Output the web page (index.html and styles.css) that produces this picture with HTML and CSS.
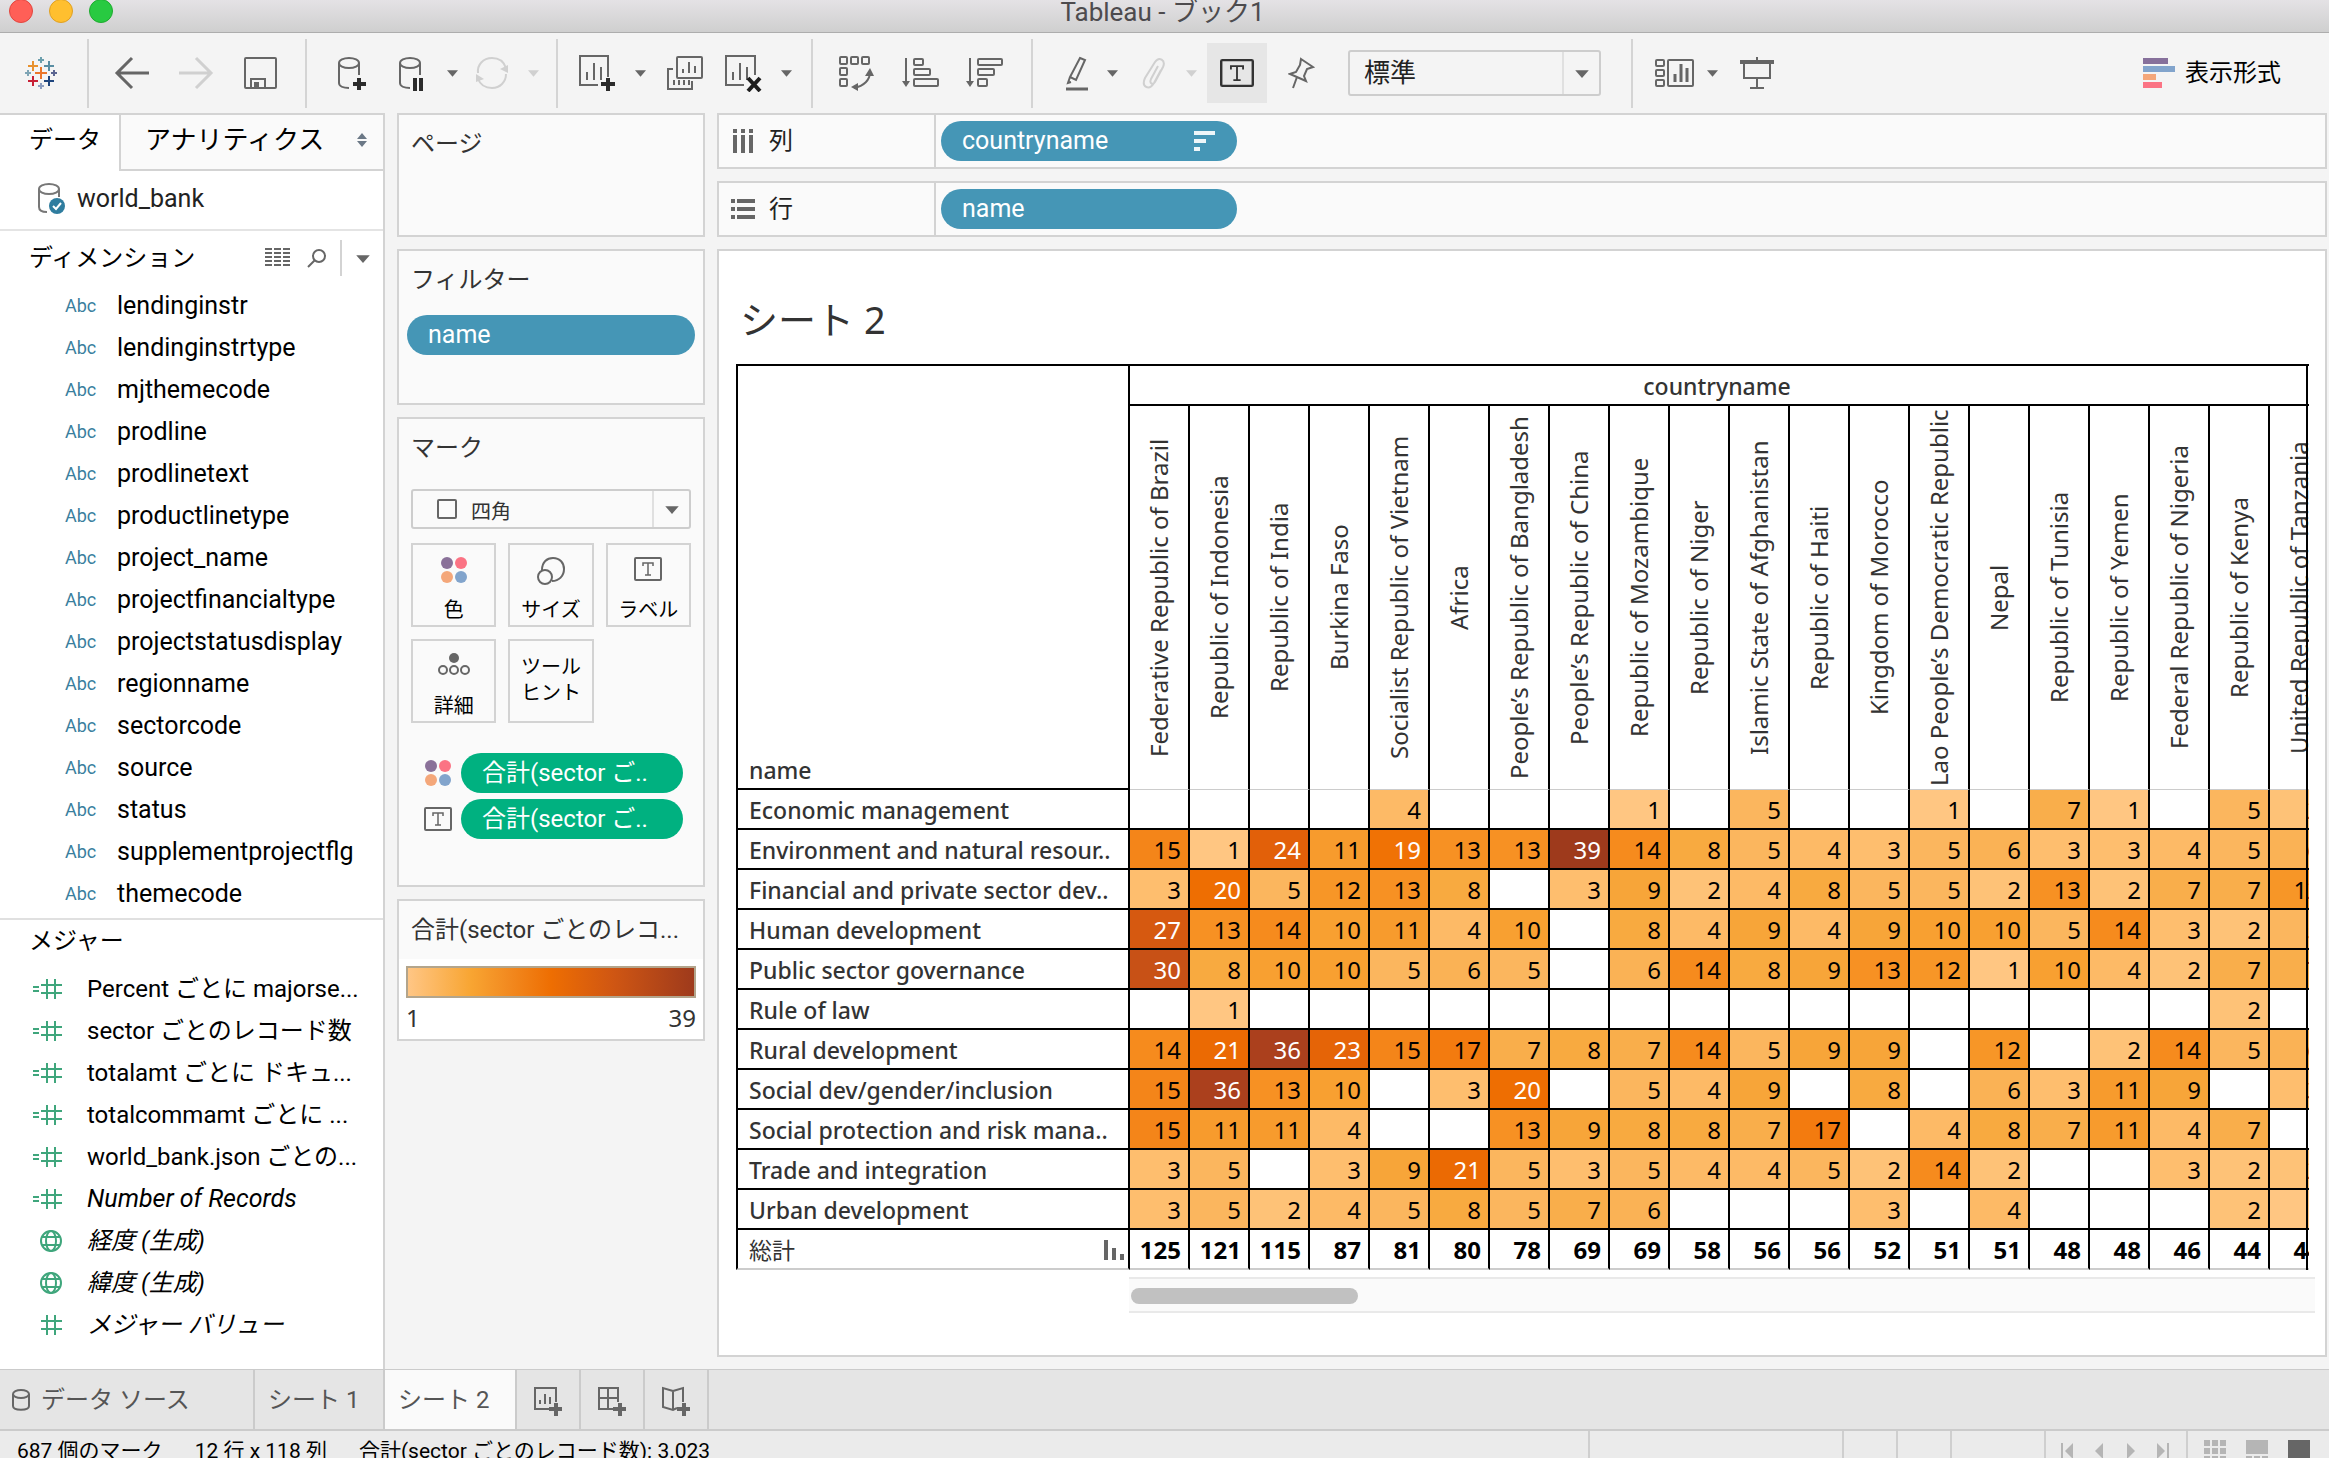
FILE: index.html
```html
<!DOCTYPE html>
<html lang="ja">
<head>
<meta charset="utf-8">
<title>Tableau - ブック1</title>
<link rel="stylesheet" href="styles.css">
</head>
<body>
<svg class="defs" aria-hidden="true">
  <symbol id="caret" viewBox="0 0 12 8"><path d="M0 1h12L6 8z"/></symbol>
  <symbol id="dots" viewBox="0 0 26 26"><circle cx="6" cy="6" r="6" fill="#8a7199"/><circle cx="20" cy="6" r="6" fill="#fb7384"/><circle cx="6" cy="20" r="6" fill="#f4a77a"/><circle cx="20" cy="20" r="6" fill="#82a4cc"/></symbol>
  <symbol id="tbox" viewBox="0 0 28 24"><rect x="1" y="1" width="26" height="22" rx="1" fill="none" stroke="currentColor" stroke-width="2"/><path d="M9 9V6h10v3M14 6v12M11 18h6" fill="none" stroke="currentColor" stroke-width="1.5"/></symbol>
  <symbol id="num" viewBox="0 0 30 20"><path d="M0 8h6M0 12h6M8 6h21M8 14h21M14 0v20M22 0v20" fill="none" stroke="#3fa67c" stroke-width="2"/></symbol>
  <symbol id="hash" viewBox="0 0 30 20"><path d="M8 6h21M8 14h21M14 0v20M22 0v20" fill="none" stroke="#3fa67c" stroke-width="2"/></symbol>
  <symbol id="globe" viewBox="0 0 30 22"><g fill="none" stroke="#3fa67c" stroke-width="2"><circle cx="18" cy="11" r="10"/><ellipse cx="18" cy="11" rx="5" ry="10"/><path d="M9 7h18M9 15h18"/></g></symbol>
</svg>

<header class="titlebar">
  <div class="lights"><i class="red"></i><i class="yellow"></i><i class="green"></i></div>
  <h1>Tableau - ブック1</h1>
</header>

<div class="toolbar">
  <div class="group start">
    <button class="tool" aria-label="スタート ページ"><svg width="34" height="34" viewBox="0 0 34 34" fill="none" stroke-width="2">
      <path d="M17 11v12M11 17h12" stroke="#eb762a"/><path d="M9 5v10M4 10h10" stroke="#e8912d"/><path d="M25 5v10M20 10h10" stroke="#5a8ea3"/><path d="M9 20v10M4 25h10" stroke="#c72035"/><path d="M25 20v10M20 25h10" stroke="#1f457e"/><path d="M17 1v6M14 4h6" stroke="#6c9fad"/><path d="M17 27v6M14 30h6" stroke="#8b9dc0"/><path d="M4 14v6M1 17h6" stroke="#7fa5b5"/><path d="M30 14v6M27 17h6" stroke="#5b6591"/></svg></button>
  </div>
  <div class="group history">
    <button class="tool" aria-label="元に戻す"><svg width="36" height="34" viewBox="0 0 36 34" fill="none" stroke="#666" stroke-width="3"><path d="M35 17H3M18 2L3 17l15 15"/></svg></button>
    <button class="tool off" aria-label="やり直し"><svg width="36" height="34" viewBox="0 0 36 34" fill="none" stroke="#d0d0d0" stroke-width="3"><path d="M1 17h32M18 2l15 15-15 15"/></svg></button>
    <button class="tool" aria-label="保存"><svg width="36" height="34" viewBox="0 0 36 34" fill="none" stroke="#666" stroke-width="2"><rect x="3" y="2" width="31" height="30" rx="1"/><path d="M9 32v-9h14v9"/><path d="M13 27h3v5h-3z" fill="#666"/></svg></button>
  </div>
  <div class="group source">
    <button class="tool wide" aria-label="新しいデータ ソース"><svg width="30" height="36" viewBox="0 0 30 36" fill="none" stroke="#666" stroke-width="2"><ellipse cx="12" cy="8" rx="10" ry="5"/><path d="M2 8v20c0 3 4 5 10 5M22 8v12"/><path d="M22 23v12M16 29h13" stroke="#2b2b2b" stroke-width="4"/></svg></button>
    <span class="split"><button class="tool" aria-label="自動更新の一時停止"><svg width="30" height="36" viewBox="0 0 30 36" fill="none" stroke="#666" stroke-width="2"><ellipse cx="12" cy="8" rx="10" ry="5"/><path d="M2 8v20c0 3 4 5 10 5M22 8v12"/><path d="M17 23v13M23 23v13" stroke="#2b2b2b" stroke-width="4"/></svg></button><button class="tool drop" aria-label="更新の設定"><svg><use href="#caret"/></svg></button></span>
    <span class="split off"><button class="tool" aria-label="更新の実行"><svg width="34" height="34" viewBox="0 0 34 34" fill="none" stroke="#d0d0d0" stroke-width="2"><path d="M3 17C2 9 8 2 17 2c7 0 12 4 14 10M31 18c0 8-6 14-14 14-7 0-12-4-14-9"/><path d="M33 9v8l-8-4zM1 26v-8l8 5z" fill="#d0d0d0" stroke="none"/></svg></button><button class="tool drop" aria-label="実行の設定"><svg><use href="#caret"/></svg></button></span>
  </div>
  <div class="group sheets">
    <span class="split"><button class="tool" aria-label="新しいワークシート"><svg width="38" height="38" viewBox="0 0 38 38" fill="none" stroke="#666" stroke-width="2"><path d="M30 23V2H2v29h18M9 26v-8M16 26V9M23 26V13"/><path d="M30 24v13M23 30h14" stroke="#2b2b2b" stroke-width="4"/></svg></button><button class="tool drop" aria-label="シートの種類"><svg><use href="#caret"/></svg></button></span>
    <button class="tool" aria-label="シートの複製"><svg width="38" height="36" viewBox="0 0 38 36" fill="none" stroke="#666" stroke-width="2"><rect x="11" y="2" width="25" height="21" rx="1"/><path d="M17 18v-4M23 18V7M29 18v-7M7 14H2v20h24v-8M8 30v-5M13 30v-5M18 30v-5M23 30v-5"/></svg></button>
    <span class="split"><button class="tool" aria-label="シートのクリア"><svg width="38" height="38" viewBox="0 0 38 38" fill="none" stroke="#666" stroke-width="2"><path d="M31 21V2H2v29h18M9 26v-8M16 26V9M23 26V13"/><path d="M24 24l12 13M36 24L24 37" stroke="#1f1f1f" stroke-width="4"/></svg></button><button class="tool drop" aria-label="クリアの種類"><svg><use href="#caret"/></svg></button></span>
  </div>
  <div class="group sorts">
    <button class="tool" aria-label="行と列の交換"><svg width="36" height="36" viewBox="0 0 36 36" fill="none" stroke="#666" stroke-width="2"><rect x="1" y="2" width="7" height="7" rx="1"/><rect x="12" y="2" width="7" height="7" rx="1"/><rect x="23" y="2" width="7" height="7" rx="1"/><rect x="1" y="13" width="7" height="7" rx="1"/><rect x="1" y="24" width="7" height="7" rx="1"/><path d="M31 17c0 8-6 14-16 16"/><path d="M31 13l4 8h-9zM12 32l7-4v8z" fill="#666" stroke="none"/></svg></button>
    <button class="tool" aria-label="昇順で並べ替え"><svg width="37" height="32" viewBox="0 0 37 32" fill="none" stroke="#666" stroke-width="2"><path d="M4 1v25"/><path d="M0 24h8l-4 6z" fill="#666" stroke="none"/><rect x="12" y="2" width="9" height="6" rx="1"/><rect x="12" y="12" width="16" height="6" rx="1"/><rect x="12" y="22" width="24" height="7" rx="1"/></svg></button>
    <button class="tool" aria-label="降順で並べ替え"><svg width="37" height="32" viewBox="0 0 37 32" fill="none" stroke="#666" stroke-width="2"><path d="M4 1v25"/><path d="M0 24h8l-4 6z" fill="#666" stroke="none"/><rect x="12" y="2" width="24" height="6" rx="1"/><rect x="12" y="12" width="16" height="6" rx="1"/><rect x="12" y="22" width="9" height="7" rx="1"/></svg></button>
  </div>
  <div class="group format">
    <span class="split"><button class="tool" aria-label="ハイライト"><svg width="22" height="36" viewBox="0 0 22 36" fill="none" stroke="#666" stroke-width="2"><path d="M14 3l5 2-9 20-6-3zM4 22l-2 6 3-1"/><path d="M0 34h22" stroke-width="3"/></svg></button><button class="tool drop" aria-label="ハイライトの設定"><svg><use href="#caret"/></svg></button></span>
    <span class="split off"><button class="tool" aria-label="グループ化"><svg width="25" height="32" viewBox="0 0 25 32" fill="none" stroke="#d0d0d0" stroke-width="2"><path d="M16 9L9 22c-2 5 2 6 4 3l8-15c3-7-4-11-8-5L3 21c-4 9 4 13 9 5l7-13"/></svg></button><button class="tool drop" aria-label="グループの設定"><svg><use href="#caret"/></svg></button></span>
    <button class="tool pressed" aria-label="マーク ラベルの表示" aria-pressed="true"><svg width="34" height="28" viewBox="0 0 28 24" preserveAspectRatio="none"><use href="#tbox"/></svg></button>
    <button class="tool" aria-label="軸の固定"><svg width="27" height="32" viewBox="0 0 27 32" fill="none" stroke="#666" stroke-width="2"><path d="M13 2l12 8-6 2-3 7 2 5L2 17l6-2 4-7zM9 20L5 31"/></svg></button>
    <label class="select fit"><select aria-label="サイズ調整"><option>標準</option></select><svg class="arrow"><use href="#caret"/></svg></label>
  </div>
  <div class="group view">
    <span class="split"><button class="tool" aria-label="カードの表示"><svg width="40" height="30" viewBox="0 0 40 30" fill="none" stroke="#666" stroke-width="2"><rect x="1" y="2" width="8" height="6" rx="1"/><rect x="1" y="12" width="8" height="6" rx="1"/><rect x="1" y="22" width="8" height="6" rx="1"/><rect x="13" y="2" width="25" height="26" rx="1"/><path d="M20 24v-8M26 24V6M32 24V10" stroke-width="3"/></svg></button><button class="tool drop" aria-label="カードの種類"><svg><use href="#caret"/></svg></button></span>
    <button class="tool" aria-label="プレゼンテーション モード"><svg width="34" height="34" viewBox="0 0 34 34" fill="none" stroke="#666" stroke-width="2"><path d="M17 1v3M4 7v15h26V7M17 22v9M10 32h14"/><path d="M0 6h34" stroke-width="4"/></svg></button>
  </div>
  <button class="showme"><svg width="32" height="30" viewBox="0 0 32 30"><path d="M0 0h25v6H0z" fill="#86709b"/><path d="M0 8h32v6H0z" fill="#82a4cc"/><path d="M0 16h13v6H0z" fill="#f4a77a"/><path d="M0 24h19v6H0z" fill="#fb7384"/></svg>表示形式</button>
</div>

<main class="workspace">
  <aside class="data-pane">
    <div class="pane-tabs"><button class="current">データ</button><button>アナリティクス<svg width="10" height="14" viewBox="0 0 10 14" fill="#6b7886"><path d="M0 6h10L5 0zM0 8h10l-5 6z"/></svg></button></div>
    <div class="source-row"><svg width="28" height="32" viewBox="0 0 28 32" fill="none" stroke="#777" stroke-width="2"><ellipse cx="12" cy="6" rx="10" ry="5"/><path d="M2 6v18c0 3 3 5 8 5M22 6v8"/><circle cx="20" cy="23" r="8" fill="#2f7d9f" stroke="none"/><path d="M16 23l3 3 5-6" stroke="#fff"/></svg>world_bank</div>
    <section class="dimensions">
      <div class="pane-head"><h2>ディメンション</h2>
        <button class="tool" aria-label="データの表示"><svg width="26" height="20" viewBox="0 0 26 20" stroke="#666" stroke-width="2"><path d="M0 1h7M9 1h7M18 1h7M0 5h7M9 5h7M18 5h7M0 9h7M9 9h7M18 9h7M0 13h7M9 13h7M18 13h7M0 17h7M9 17h7M18 17h7"/></svg></button>
        <button class="tool" aria-label="検索"><svg width="20" height="20" viewBox="0 0 20 20" fill="none" stroke="#666" stroke-width="2"><circle cx="12" cy="8" r="6"/><path d="M8 12l-7 7"/></svg></button>
        <button class="tool menu" aria-label="メニュー"><svg width="16" height="9"><use href="#caret"/></svg></button></div>
      <ul class="fields">
        <li><b>Abc</b>lendinginstr</li><li><b>Abc</b>lendinginstrtype</li><li><b>Abc</b>mjthemecode</li><li><b>Abc</b>prodline</li><li><b>Abc</b>prodlinetext</li><li><b>Abc</b>productlinetype</li><li><b>Abc</b>project_name</li><li><b>Abc</b>projectfinancialtype</li><li><b>Abc</b>projectstatusdisplay</li><li><b>Abc</b>regionname</li><li><b>Abc</b>sectorcode</li><li><b>Abc</b>source</li><li><b>Abc</b>status</li><li><b>Abc</b>supplementprojectflg</li><li><b>Abc</b>themecode</li>
      </ul>
    </section>
    <section class="measures">
      <h2>メジャー</h2>
      <ul class="fields">
        <li><svg><use href="#num"/></svg>Percent ごとに majorse...</li>
        <li><svg><use href="#num"/></svg>sector ごとのレコード数</li>
        <li><svg><use href="#num"/></svg>totalamt ごとに ドキュ...</li>
        <li><svg><use href="#num"/></svg>totalcommamt ごとに ...</li>
        <li><svg><use href="#num"/></svg>world_bank.json ごとの...</li>
        <li class="generated latin"><svg><use href="#num"/></svg>Number of Records</li>
        <li class="generated"><svg><use href="#globe"/></svg>経度 (生成)</li>
        <li class="generated"><svg><use href="#globe"/></svg>緯度 (生成)</li>
        <li class="generated"><svg><use href="#hash"/></svg>メジャー バリュー</li>
      </ul>
    </section>
  </aside>

  <div class="cards">
    <section class="card pages"><h2>ページ</h2></section>
    <section class="card filters"><h2>フィルター</h2><button class="pill">name</button></section>
    <section class="card marks"><h2>マーク</h2>
      <label class="select mark-type"><svg class="square" width="20" height="20"><rect x="1" y="1" width="18" height="18" rx="1" fill="none" stroke="#666" stroke-width="2"/></svg><select aria-label="マーク タイプ"><option>四角</option></select><svg class="arrow"><use href="#caret"/></svg></label>
      <div class="mark-grid">
        <button><svg width="26" height="26"><use href="#dots"/></svg>色</button>
        <button><svg width="28" height="28" viewBox="0 0 28 28" fill="none" stroke="#666" stroke-width="2"><path d="M5 13C5 5 10 1 16 1c7 0 11 5 11 11 0 7-5 12-12 12"/><circle cx="8" cy="20" r="7"/></svg>サイズ</button>
        <button><svg width="28" height="24"><use href="#tbox"/></svg>ラベル</button>
        <button><svg width="32" height="22" viewBox="0 0 32 22"><circle cx="16" cy="5" r="5" fill="#666"/><g fill="none" stroke="#666" stroke-width="2"><circle cx="5" cy="17" r="4"/><circle cx="16" cy="17" r="4"/><circle cx="27" cy="17" r="4"/></g></svg>詳細</button>
        <button>ツール<br>ヒント</button>
      </div>
      <div class="encoding"><svg width="26" height="26"><use href="#dots"/></svg><button class="pill measure">合計(sector ご..</button></div>
      <div class="encoding"><svg width="28" height="24"><use href="#tbox"/></svg><button class="pill measure">合計(sector ご..</button></div>
    </section>
    <section class="card legend"><h2>合計(sector ごとのレコ...</h2>
      <div class="ramp"></div><div class="range"><span>1</span><span>39</span></div></section>
  </div>

  <div class="canvas">
    <div class="shelf"><div class="shelf-name"><svg width="20" height="24" viewBox="0 0 20 24" stroke="#666" stroke-width="4"><path d="M2 0v4M10 0v4M18 0v4M2 6v18M10 6v18M18 6v18"/></svg>列</div><button class="pill">countryname<svg width="21" height="20" viewBox="0 0 21 20" fill="#eef6f9"><path d="M0 0h21v4H0zM0 8h12v4H0zM0 16h6v4H0z"/></svg></button></div>
    <div class="shelf"><div class="shelf-name"><svg width="24" height="20" viewBox="0 0 24 20" stroke="#666" stroke-width="4"><path d="M0 2h4M0 10h4M0 18h4M6 2h18M6 10h18M6 18h18"/></svg>行</div><button class="pill">name</button></div>
    <section class="sheet">
      <h2>シート 2</h2>
      <div class="viewport">
        <table>
          <colgroup><col class="label-col"><col span="20"></colgroup>
          <thead>
            <tr><th rowspan="2" class="corner">name</th><th colspan="20" class="dimension">countryname</th></tr>
            <tr class="countries"><th><span>Federative Republic of Brazil</span><th><span>Republic of Indonesia</span><th><span>Republic of India</span><th><span>Burkina Faso</span><th><span>Socialist Republic of Vietnam</span><th><span>Africa</span><th><span>People’s Republic of Bangladesh</span><th><span>People’s Republic of China</span><th><span>Republic of Mozambique</span><th><span>Republic of Niger</span><th><span>Islamic State of Afghanistan</span><th><span>Republic of Haiti</span><th><span>Kingdom of Morocco</span><th><span>Lao People’s Democratic Republic</span><th><span>Nepal</span><th><span>Republic of Tunisia</span><th><span>Republic of Yemen</span><th><span>Federal Republic of Nigeria</span><th><span>Republic of Kenya</span><th><span>United Republic of Tanzania</span></tr>
          </thead>
          <tbody>
            <tr><th>Economic management<td><td><td><td><td class="v4">4<td><td><td><td class="v1">1<td><td class="v5">5<td><td><td class="v1">1<td><td class="v7">7<td class="v1">1<td><td class="v5">5<td class="v2">2</tr>
            <tr><th>Environment and natural resour..<td class="v15">15<td class="v1">1<td class="v24">24<td class="v11">11<td class="v19">19<td class="v13">13<td class="v13">13<td class="v39">39<td class="v14">14<td class="v8">8<td class="v5">5<td class="v4">4<td class="v3">3<td class="v5">5<td class="v6">6<td class="v3">3<td class="v3">3<td class="v4">4<td class="v5">5<td class="v6">6</tr>
            <tr><th>Financial and private sector dev..<td class="v3">3<td class="v20">20<td class="v5">5<td class="v12">12<td class="v13">13<td class="v8">8<td><td class="v3">3<td class="v9">9<td class="v2">2<td class="v4">4<td class="v8">8<td class="v5">5<td class="v5">5<td class="v2">2<td class="v13">13<td class="v2">2<td class="v7">7<td class="v7">7<td class="v12">12</tr>
            <tr><th>Human development<td class="v27">27<td class="v13">13<td class="v14">14<td class="v10">10<td class="v11">11<td class="v4">4<td class="v10">10<td><td class="v8">8<td class="v4">4<td class="v9">9<td class="v4">4<td class="v9">9<td class="v10">10<td class="v10">10<td class="v5">5<td class="v14">14<td class="v3">3<td class="v2">2<td class="v5">5</tr>
            <tr><th>Public sector governance<td class="v30">30<td class="v8">8<td class="v10">10<td class="v10">10<td class="v5">5<td class="v6">6<td class="v5">5<td><td class="v6">6<td class="v14">14<td class="v8">8<td class="v9">9<td class="v13">13<td class="v12">12<td class="v1">1<td class="v10">10<td class="v4">4<td class="v2">2<td class="v7">7<td class="v7">7</tr>
            <tr><th>Rule of law<td><td class="v1">1<td><td><td><td><td><td><td><td><td><td><td><td><td><td><td><td><td class="v2">2<td></tr>
            <tr><th>Rural development<td class="v14">14<td class="v21">21<td class="v36">36<td class="v23">23<td class="v15">15<td class="v17">17<td class="v7">7<td class="v8">8<td class="v7">7<td class="v14">14<td class="v5">5<td class="v9">9<td class="v9">9<td><td class="v12">12<td><td class="v2">2<td class="v14">14<td class="v5">5<td class="v6">6</tr>
            <tr><th>Social dev/gender/inclusion<td class="v15">15<td class="v36">36<td class="v13">13<td class="v10">10<td><td class="v3">3<td class="v20">20<td><td class="v5">5<td class="v4">4<td class="v9">9<td><td class="v8">8<td><td class="v6">6<td class="v3">3<td class="v11">11<td class="v9">9<td><td class="v3">3</tr>
            <tr><th>Social protection and risk mana..<td class="v15">15<td class="v11">11<td class="v11">11<td class="v4">4<td><td><td class="v13">13<td class="v9">9<td class="v8">8<td class="v8">8<td class="v7">7<td class="v17">17<td><td class="v4">4<td class="v8">8<td class="v7">7<td class="v11">11<td class="v4">4<td class="v7">7<td></tr>
            <tr><th>Trade and integration<td class="v3">3<td class="v5">5<td><td class="v3">3<td class="v9">9<td class="v21">21<td class="v5">5<td class="v3">3<td class="v5">5<td class="v4">4<td class="v4">4<td class="v5">5<td class="v2">2<td class="v14">14<td class="v2">2<td><td><td class="v3">3<td class="v2">2<td class="v2">2</tr>
            <tr><th>Urban development<td class="v3">3<td class="v5">5<td class="v2">2<td class="v4">4<td class="v5">5<td class="v8">8<td class="v5">5<td class="v7">7<td class="v6">6<td><td><td><td class="v3">3<td><td class="v4">4<td><td><td><td class="v2">2<td class="v1">1</tr>
          </tbody>
          <tfoot>
            <tr><th><div class="total">総計<svg width="20" height="20" viewBox="0 0 20 20" fill="#666"><path d="M0 0h4v20H0zM8 8h4v12H8zM16 14h4v6h-4z"/></svg></div><td>125<td>121<td>115<td>87<td>81<td>80<td>78<td>69<td>69<td>58<td>56<td>56<td>52<td>51<td>51<td>48<td>48<td>46<td>44<td>44</tr>
          </tfoot>
        </table>
      </div>
      <div class="scroll"><div class="thumb"></div></div>
    </section>
  </div>
</main>

<nav class="sheet-tabs">
  <button class="ds"><svg width="18" height="22" viewBox="0 0 18 22" fill="none" stroke="#666" stroke-width="2"><ellipse cx="9" cy="5" rx="8" ry="4"/><path d="M1 5v12c0 5 16 5 16 0V5"/></svg>データ ソース</button>
  <button class="tab">シート 1</button>
  <button class="tab current">シート 2</button>
  <button class="new" aria-label="新しいワークシート"><svg width="30" height="30" viewBox="0 0 30 30" fill="none" stroke="#666" stroke-width="2"><path d="M23 16V2H2v21h14M7 18v-4M12 18V8M17 18v-7"/><path d="M23 17v13M16 23h13" stroke-width="4"/></svg></button>
  <button class="new" aria-label="新しいダッシュボード"><svg width="30" height="30" viewBox="0 0 30 30" fill="none" stroke="#666" stroke-width="2"><path d="M21 16V2H2v21h14M2 12h19M11 2v21"/><path d="M23 17v13M16 23h13" stroke-width="4"/></svg></button>
  <button class="new" aria-label="新しいストーリー"><svg width="30" height="30" viewBox="0 0 30 30" fill="none" stroke="#666" stroke-width="2"><path d="M12 5L2 2v19l10 3 4-2M12 5v19M12 5l10-3v14"/><path d="M23 17v13M16 23h13" stroke-width="4"/></svg></button>
</nav>

<footer class="status">
  <p><span>687 個のマーク</span><span>12 行 x 118 列</span><span>合計(sector ごとのレコード数): 3.023</span></p>
  <i class="slot-xl"></i><i class="slot-s"></i><i class="slot-s"></i><i class="slot-m"></i>
  <div class="nav">
    <button aria-label="最初"><svg width="12" height="16" viewBox="0 0 12 16"><path d="M0 0h2v16H0zM12 0v16L4 8z"/></svg></button>
    <button aria-label="前へ"><svg width="12" height="16" viewBox="0 0 12 16"><path d="M10 0v16L2 8z"/></svg></button>
    <button aria-label="次へ"><svg width="12" height="16" viewBox="0 0 12 16"><path d="M2 0v16l8-8z"/></svg></button>
    <button aria-label="最後"><svg width="12" height="16" viewBox="0 0 12 16"><path d="M10 0h2v16h-2zM0 0v16l8-8z"/></svg></button>
  </div>
  <div class="modes">
    <button aria-label="シート一覧"><svg width="22" height="22" viewBox="0 0 22 22"><path d="M0 0h6v6H0zM8 0h6v6H8zM16 0h6v6h-6zM0 8h6v6H0zM8 8h6v6H8zM16 8h6v6h-6zM0 16h6v6H0zM8 16h6v6H8zM16 16h6v6h-6z"/></svg></button>
    <button aria-label="フィルムストリップ"><svg width="22" height="22" viewBox="0 0 22 22"><path d="M0 0h22v14H0zM0 16h6v6H0zM8 16h6v6H8zM16 16h6v6h-6z"/></svg></button>
    <button class="current" aria-label="タブ"><svg width="22" height="22" viewBox="0 0 22 22"><path d="M0 0h22v22H0z"/></svg></button>
  </div>
</footer>
</body>
</html>
```
FILE: styles.css
```css
* { box-sizing: border-box; }
html, body { height: 100%; margin: 0; overflow: hidden; }
body {
  display: flex; flex-direction: column;
  background: #f4f4f4; color: #000;
  font: 24px/42px Roboto, "Noto Sans CJK JP", sans-serif;
}
h1, h2, p, ul { margin: 0; padding: 0; font-weight: 400; font-size: inherit; }
ul { list-style: none; }
button, select { font: inherit; color: inherit; background: none; border: 0; padding: 0; margin: 0; text-align: left; }
svg { display: block; flex: none; }
.defs { position: absolute; width: 0; height: 0; }

/* title bar */
.titlebar { position: relative; flex: none; height: 33px; background: linear-gradient(#e4e2e5, #cfcfcf); border-bottom: 1px solid #adadad; }
.titlebar h1 { text-align: center; line-height: 24px; font-size: 26px; color: #4d4b4e; padding-right: 4px; }
.lights { position: absolute; left: 9px; top: -1px; display: flex; gap: 16px; }
.lights i { width: 24px; height: 24px; border-radius: 50%; }
.red { background: #ff5f57; border: 1px solid #e2463f; }
.yellow { background: #ffbf2f; border: 1px solid #dfa023; }
.green { background: #28ca41; border: 1px solid #1eab2f; }

/* toolbar */
.toolbar { flex: none; display: flex; height: 80px; }
.group { display: flex; align-items: center; margin: 6px 0 5px; padding: 0 20px 2px; border-left: 2px solid #d4d4d4; }
.tool { display: flex; align-items: center; color: #666; }
.split { display: flex; align-items: center; gap: 19px; }
.drop svg { width: 11px; height: 8px; fill: #666; }
.off .drop svg { fill: #d0d0d0; }
.start { border-left: 0; padding: 0 29px 2px 24px; }
.history { gap: 28px; padding: 0 27px 2px 25px; }
.source { gap: 17px; padding: 0 17px 2px 30px; }
.wide { width: 44px; }
.sheets { gap: 20px; padding: 0 19px 2px 20px; }
.sorts { gap: 27px; padding: 0 28px 2px 26px; }
.format { gap: 24px; padding: 0 30px 2px 33px; }
.view { gap: 22px; padding: 0 24px 2px 22px; }
.view .split { gap: 12px; }
.pressed { width: 60px; height: 60px; margin: 0 -3px 0 -14px; justify-content: center; background: #e6e6e6; color: #333; }
.select { position: relative; display: block; }
.select select { appearance: none; width: 100%; height: 100%; border: 2px solid #cdcdcd; border-radius: 3px; background: linear-gradient(#e0e0e0, #e0e0e0) right 35px top / 2px 100% no-repeat; }
.arrow { position: absolute; right: 12px; top: 50%; width: 14px; height: 9px; margin-top: -4px; fill: #666; pointer-events: none; }
.fit { width: 253px; height: 46px; margin-left: 9px; font-size: 26px; }
.fit select { padding-left: 14px; color: #222; }
.showme { display: flex; align-items: center; gap: 10px; margin-left: auto; padding-right: 48px; height: 79px; }

/* workspace */
.workspace { flex: 1; min-height: 0; display: grid; grid-template-columns: 385px 308px minmax(0, 1fr); gap: 12px; padding-right: 2px; }
.data-pane { background: #fff; border: solid #d3d3d3; border-width: 2px 2px 0 0; overflow: hidden; }
.pane-tabs { display: flex; height: 56px; }
.pane-tabs button { flex: 1; display: flex; align-items: center; justify-content: space-between; padding: 0 16px 4px 24px; font-size: 26px; background: #fafafa; border: solid #d3d3d3; border-width: 0 0 2px 2px; }
.pane-tabs .current { flex: none; width: 119px; padding: 0 0 6px 29px; font-size: 24px; background: none; border: 0; }
.source-row { display: flex; align-items: center; gap: 12px; height: 60px; padding: 0 0 2px 37px; font-size: 25px; border-bottom: 2px solid #e4e4e4; color: #222; }
.dimensions { border-bottom: 2px solid #e0e0e0; padding-bottom: 3px; }
.pane-head { display: flex; align-items: center; gap: 16px; height: 54px; padding-left: 29px; }
.pane-head h2 { flex: 1; }
.menu { height: 36px; width: 43px; justify-content: center; border-left: 2px solid #d3d3d3; fill: #666; }
.pane-head .menu { margin-left: -3px; }
.fields li { display: flex; align-items: center; height: 42px; padding-left: 117px; white-space: nowrap; }
.dimensions li, .fields .latin { font-size: 25px; }
.fields b { width: 52px; margin-left: -52px; font-weight: 400; font-size: 18px; color: #3a7f9e; }
.measures h2 { padding-left: 29px; height: 48px; line-height: 42px; }
.fields .latin, .measures li { padding-left: 87px; }
.measures svg { width: 30px; height: 22px; margin: 0 24px 0 -54px; }
.generated { font-style: italic; }

.cards { display: flex; flex-direction: column; gap: 12px; }
.card { background: #fafafa; border: 2px solid #d3d3d3; padding: 8px 12px 0; color: #333; }
.pages { height: 124px; }
.filters { height: 156px; }
.marks { height: 470px; }
.legend { background: #fff; height: 142px; padding: 0 7px; }
.pill { display: flex; align-items: center; justify-content: space-between; width: 100%; height: 40px; border-radius: 20px; padding: 0 22px 0 21px; background: #4596b6; color: #fff; font-size: 25px; white-space: nowrap; }
.filters .pill { width: auto; margin: 14px -4px 0; min-width: 288px; }
.encoding .pill { background: #00b180; font-size: 24px; }
.mark-type { height: 40px; margin: 20px 0 14px; font-size: 20px; }
.mark-type select { padding-left: 58px; color: #333; }
.square { position: absolute; left: 26px; top: 10px; }
.mark-grid { display: grid; grid-template-columns: repeat(3, 1fr); gap: 12px; margin-bottom: 30px; }
.mark-grid button { display: flex; flex-direction: column; align-items: center; justify-content: space-between; height: 84px; border: 2px solid #d3d3d3; padding: 12px 0 2px; font-size: 20px; line-height: 26px; color: #000; text-align: center; }
.mark-grid button:last-child { justify-content: center; padding: 0 0 2px; }
.mark-grid svg, .encoding svg { color: #666; }
.encoding { display: grid; grid-template-columns: 30px 1fr; align-items: center; justify-items: center; gap: 8px; padding: 0 8px 0 12px; margin-bottom: 6px; }
.legend h2 { margin: 0 -7px 7px; padding: 8px 12px; background: #fafafa; white-space: nowrap; }
.ramp { height: 32px; border: 2px solid #b3a58c; background: linear-gradient(90deg, #ffc685, #f8a532 22%, #f28a20 35%, #ee6e02 50%, #cf5613 72%, #9e3a1c); }
.range { display: flex; justify-content: space-between; line-height: 40px; font-family: "Noto Sans", sans-serif; }

/* shelves and sheet */
.canvas { display: flex; flex-direction: column; gap: 12px; min-width: 0; padding-bottom: 12px; }
.shelf { flex: none; display: flex; align-items: center; height: 56px; background: #fafafa; border: 2px solid #d3d3d3; }
.shelf-name { display: flex; align-items: center; gap: 14px; width: 217px; height: 100%; padding-left: 12px; border-right: 2px solid #d3d3d3; color: #222; }
.shelf-name svg { width: 24px; }
.shelf .pill { width: 296px; margin-left: 5px; }
.sheet { flex: 1; background: #fff; border: 2px solid #d3d3d3; padding: 40px 16px 0 17px; color: #333; font-family: "Noto Sans", "Noto Sans CJK JP", sans-serif; }
.sheet h2 { font-size: 38px; line-height: 56px; margin-bottom: 17px; padding-left: 4px; }
.viewport { position: relative; overflow: hidden; }
.viewport::after { content: ""; position: absolute; top: 0; bottom: 0; right: 1px; width: 2px; background: #000; }
table { table-layout: fixed; width: 1594px; border-collapse: separate; border-spacing: 0; border-top: 2px solid #000; line-height: 36px; }
col { width: 60px; }
.label-col { width: 394px; }
th, td { height: 40px; padding: 2px 0 0; border: solid #000; border-width: 0 2px 2px 0; white-space: nowrap; }
th { font-weight: 500; font-size: 23px; text-align: left; padding-left: 11px; border-left-width: 2px; }
.corner { vertical-align: bottom; }
.dimension { text-align: center; padding: 2px 24px 0 0; border-left: 0; }
.countries th { height: 384px; padding: 0; border-left: 0; border-bottom: 1px solid #ccc; font-weight: 400; font-size: 24px; }
.countries span { display: block; width: 58px; height: 383px; line-height: 58px; text-align: center; writing-mode: vertical-rl; transform: rotate(180deg); }
td { text-align: right; padding-right: 7px; color: #000; }
tfoot td { font-weight: 700; }
tfoot th, tfoot td { border-bottom-color: #ccc; }
.total { display: flex; justify-content: space-between; align-items: center; padding-right: 4px; font-weight: 400; }
.scroll { height: 36px; margin: 7px -6px 0 393px; padding: 9px 2px; background: #fafafa; border: solid #e9e9e9; border-width: 2px 0; }
.thumb { width: 227px; height: 16px; border-radius: 8px; background: #c1c1c1; }

.v1 { background: #ffc682; } .v2 { background: #fec277; } .v3 { background: #febe6e; } .v4 { background: #fdba66; }
.v5 { background: #fbb65e; } .v6 { background: #fab255; } .v7 { background: #f9ae4b; } .v8 { background: #f8aa40; }
.v9 { background: #f7a539; } .v10 { background: #f8a031; } .v11 { background: #f79b2d; } .v12 { background: #f79627; }
.v13 { background: #f79123; } .v14 { background: #f68b1d; } .v15 { background: #f48519; } .v17 { background: #f37b0f; }
.v19 { background: #f07205; } .v20 { background: #ee6e02; } .v21 { background: #eb6a03; } .v23 { background: #e56407; }
.v24 { background: #e26009; } .v27 { background: #d65910; } .v30 { background: #c85116; } .v36 { background: #ab401d; }
.v39 { background: #9e3a1c; }
.v19, .v20, .v21, .v23, .v24, .v27, .v30, .v36, .v39 { color: #fff; }

/* sheet tabs and status bar */
.sheet-tabs { flex: none; display: flex; height: 62px; background: #e5e5e5; border: solid #cbcbcb; border-width: 1px 0 2px; color: #555; }
.sheet-tabs button { display: flex; align-items: center; border-right: 2px solid #cbcbcb; }
.ds { width: 255px; gap: 11px; padding-left: 12px; }
.tab { width: 130px; padding-left: 13px; }
.sheet-tabs .current { width: 132px; background: #fafafa; }
.new { width: 64px; justify-content: center; padding-top: 2px; }
.status { flex: none; display: flex; height: 27px; overflow: hidden; background: #ebebeb; font-size: 20px; line-height: 40px; white-space: nowrap; }
.status p { flex: 1; display: flex; gap: 32px; padding-left: 17px; font-size: 21px; }
.status i, .nav, .modes { flex: none; height: 40px; border-left: 2px solid #cfcfcf; }
.slot-xl { width: 254px; }
.slot-s { width: 54px; }
.slot-m { width: 94px; }
.nav, .modes { display: flex; align-items: center; gap: 20px; fill: #b5b5b5; }
.nav { width: 142px; padding-left: 15px; }
.modes { width: 143px; padding-left: 16px; }
.modes .current { fill: #666; }
```
